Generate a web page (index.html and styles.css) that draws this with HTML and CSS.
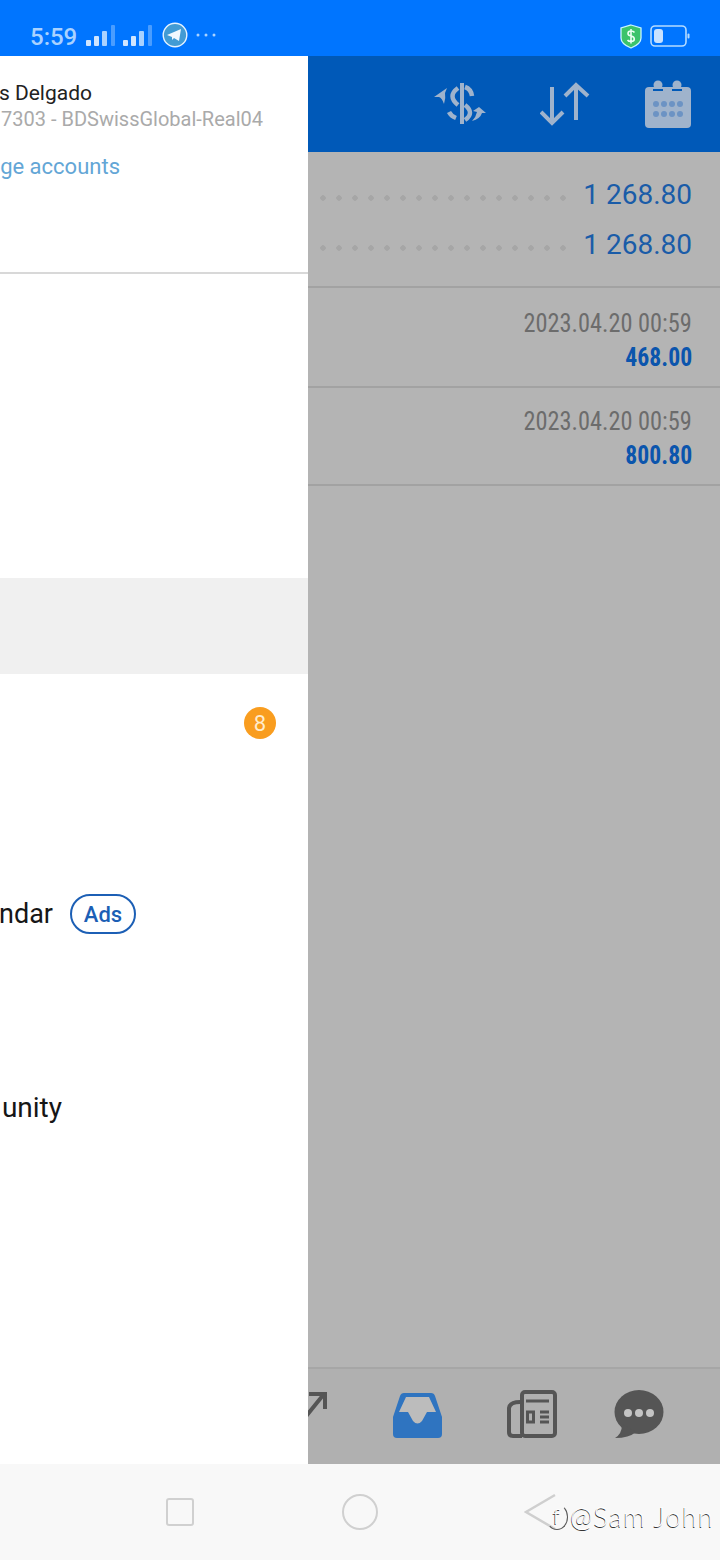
FILE: index.html
```html
<!DOCTYPE html>
<html lang="en">
<head>
  <meta charset="UTF-8" />
  <meta name="viewport" content="width=device-width, initial-scale=1.0"/>
  <title>Trading history</title>
  <link rel="stylesheet" href="styles.css">
</head>
<body>
  <!-- Status bar -->
  <div class="status-bar">
    <span class="clock">5:59</span>
    <svg class="signal" width="30" height="22" viewBox="0 0 30 22">
      <rect x="0" y="15" width="5" height="6" rx="1" fill="#cfe5ff"/>
      <rect x="8" y="11" width="5" height="10" rx="1" fill="#cfe5ff"/>
      <rect x="16" y="6" width="5" height="15" rx="1" fill="#a9d2ff"/>
      <rect x="25" y="0" width="4" height="21" rx="1" fill="#4a9dff"/>
    </svg>
    <svg class="signal second" width="30" height="22" viewBox="0 0 30 22">
      <rect x="0" y="15" width="5" height="6" rx="1" fill="#cfe5ff"/>
      <rect x="8" y="11" width="5" height="10" rx="1" fill="#cfe5ff"/>
      <rect x="16" y="6" width="5" height="15" rx="1" fill="#a9d2ff"/>
      <rect x="25" y="0" width="4" height="21" rx="1" fill="#4a9dff"/>
    </svg>
    <svg class="telegram" width="26" height="26" viewBox="0 0 26 26">
      <circle cx="13" cy="13" r="11.8" fill="#429bd4" stroke="#e6f3ff" stroke-width="1.4"/>
      <path d="M5 13 L19 7 L17 19 L12 16 L10 18 L10 15 Z" fill="#f2f8ff"/>
    </svg>
    <svg class="more" width="20" height="4" viewBox="0 0 20 4">
      <circle cx="2" cy="2" r="1.5" fill="#a9d2ff"/>
      <circle cx="10" cy="2" r="1.5" fill="#a9d2ff"/>
      <circle cx="18" cy="2" r="1.5" fill="#a9d2ff"/>
    </svg>
    <svg class="shield" width="22" height="25" viewBox="0 0 22 25">
      <path d="M11 1 L21 4 V14 Q21 20 11 24 Q1 20 1 14 V4 Z" fill="#3cc36b" stroke="#c9f5ff" stroke-width="1.3"/>
      <path d="M14.5 8.5 Q13.5 7 11 7 Q8 7 8 9.5 Q8 11.5 11 12 Q14.3 12.6 14.3 15 Q14.3 17.5 11 17.5 Q8.500 17.500 7.500 16 M11 5 V19.500" fill="none" stroke="#eafff2" stroke-width="1.6"/>
    </svg>
    <svg class="battery" width="40" height="22" viewBox="0 0 40 22">
      <rect x="1" y="1" width="35" height="20" rx="4" fill="none" stroke="#b5dbff" stroke-width="1.6"/>
      <rect x="4" y="4" width="9" height="14" rx="3" fill="#c9e2ff"/>
      <rect x="37.500" y="8.500" width="2" height="5" rx="1" fill="#b5dbff"/>
    </svg>
  </div>

  <div class="screen">
    <main class="app">
      <!-- Toolbar -->
      <header class="toolbar">
        <svg width="54" height="42" viewBox="0 0 54 42" fill="none" stroke="#9fb3cc">
          <path d="M28 0 V41" stroke-width="4"/>
          <path d="M31 4 Q37 6 38 13 M24 5 Q13 13 24 22 M31 22 Q41 30 31 37 M15 29 Q17 33 22 35" stroke-width="4.500"/>
          <path d="M0 14 L13 5 L11 10 Q12 15 10 21 Q8 15 5 14 Z" fill="#9fb3cc" stroke="none"/>
          <path d="M52 30 L45 24 L39 28 L43 29 Q42 34 38 38 Q46 36 48 30 Z" fill="#9fb3cc" stroke="none"/>
        </svg>
        <svg class="tool-arrows" width="50" height="44" viewBox="0 0 50 44" fill="none" stroke="#9fb3cc" stroke-width="4">
          <path d="M12 5 V41 M1 30 L12 41 L23 30"/>
          <path d="M36 38 V3 M25 14 L36 3 L48 14"/>
        </svg>
        <svg width="46" height="48" viewBox="0 0 46 48">
          <rect x="0" y="7" width="46" height="41" rx="4" fill="#9fb3cc"/>
          <circle cx="13" cy="5" r="4.500" fill="#9fb3cc"/>
          <circle cx="32" cy="5" r="4.500" fill="#9fb3cc"/>
          <rect x="8" y="9" width="10" height="2" fill="#0059b8"/>
          <rect x="27" y="9" width="10" height="2" fill="#0059b8"/>
          <g fill="#6c93c4">
            <circle cx="11" cy="24" r="3"/><circle cx="19" cy="24" r="3"/><circle cx="27" cy="24" r="3"/><circle cx="35" cy="24" r="3"/>
            <circle cx="11" cy="34" r="3"/><circle cx="19" cy="34" r="3"/><circle cx="27" cy="34" r="3"/><circle cx="35" cy="34" r="3"/>
          </g>
        </svg>
      </header>

      <!-- Summary -->
      <section class="summary">
        <div class="summary-row"><span class="leader"></span><span class="total">1 268.80</span></div>
        <div class="summary-row"><span class="leader"></span><span class="total">1 268.80</span></div>
      </section>

      <!-- Deals -->
      <div class="deal first">
        <span class="deal-date">2023.04.20 00:59</span>
        <span class="deal-amount">468.00</span>
      </div>
      <div class="deal">
        <span class="deal-date">2023.04.20 00:59</span>
        <span class="deal-amount">800.80</span>
      </div>

      <!-- Tab bar -->
      <nav class="tabs">
        <svg class="tab-trade" width="28" height="34" viewBox="0 0 28 34" fill="none" stroke="#555" stroke-width="4">
          <path d="M0 34 L25 3 M10 3 H26 V18"/>
        </svg>
        <svg class="tab-inbox" width="49" height="45" viewBox="0 0 49 45">
          <path d="M11 0 H38 Q41 0 42 3 L49 24 V41 Q49 45 45 45 H4 Q0 45 0 41 V24 L7 3 Q8 0 11 0 Z" fill="#2f74c0"/>
          <path d="M13 4 H36 L43 19 H34 L29 28 Q24.500 33 20 28 L15 19 H6 Z" fill="#bcbcbc"/>
        </svg>
        <svg class="tab-news" width="50" height="48" viewBox="0 0 50 48" fill="none" stroke="#555">
          <rect x="15" y="2" width="33" height="44" rx="3" stroke-width="4"/>
          <path d="M13 12 Q3 12 2 18 V42 Q2 46 6 46 H15" stroke-width="4"/>
          <path d="M19 11 H42" stroke-width="3"/>
          <rect x="20.500" y="22" width="6" height="10" stroke-width="3"/>
          <path d="M33 22 H42 M33 27 H42 M33 32 H42" stroke-width="3"/>
        </svg>
        <svg class="tab-chat" width="50" height="48" viewBox="0 0 50 48">
          <ellipse cx="25" cy="22" rx="24.500" ry="22" fill="#555"/>
          <path d="M8 34 Q8 44 1 48 Q15 48 22 42 Z" fill="#555"/>
          <circle cx="14" cy="23" r="4" fill="#c4c4c4"/>
          <circle cx="25" cy="23" r="4" fill="#c4c4c4"/>
          <circle cx="36" cy="23" r="4" fill="#c4c4c4"/>
        </svg>
      </nav>
    </main>

    <!-- Drawer, slid partly off the left edge -->
    <aside class="drawer">
      <div class="account">
        <div class="edge name-edge"><span>s Delgado</span></div>
        <div class="edge login-edge"><span>7303 - BDSwissGlobal-Real04</span></div>
        <div class="edge manage-edge"><span>ge accounts</span></div>
      </div>
      <div class="drawer-gap"></div>
      <div class="drawer-band"></div>
      <div class="drawer-row badge-row"><span class="badge">8</span></div>
      <div class="drawer-row"></div>
      <div class="drawer-row">
        <div class="edge calendar-edge"><span>ndar</span></div>
        <span class="ads">Ads</span>
      </div>
      <div class="drawer-row"></div>
      <div class="drawer-row community-row">
        <div class="edge community-edge"><span>unity</span></div>
      </div>
    </aside>
  </div>

  <!-- System navigation -->
  <footer class="system-nav">
    <span class="nav-square"></span>
    <span class="nav-circle"></span>
    <svg class="nav-back" width="34" height="38" viewBox="0 0 34 38" fill="none" stroke="#cfcfcf" stroke-width="2.500">
      <path d="M31 2 L2 19 L31 36"/>
    </svg>
    <div class="watermark">
      <span class="wm-logo">f</span><span>@Sam John</span>
    </div>
  </footer>
</body>
</html>
```

FILE: styles.css
```css
* {
  box-sizing: border-box;
}
body {
  font-family: 'Roboto', sans-serif;
  margin: 0;
  width: 720px;
  height: 1560px;
  overflow: hidden;
  display: flex;
  flex-direction: column;
  background-color: #f8f8f8;
}

/* status bar */
.status-bar {
  height: 56px;
  flex: none;
  background-color: #0075ff;
  display: flex;
  align-items: center;
  padding: 16px 30px 0;
}
.clock {
  font-size: 24px;
  font-weight: 500;
  color: #a9d2ff;
  margin-top: 2px;
}
.signal {
  margin-left: 9px;
}
.signal.second {
  margin-left: 7px;
}
.telegram {
  margin-left: 9px;
  margin-bottom: 2px;
}
.more {
  margin-left: 8px;
  margin-bottom: 2px;
}
.shield {
  margin-left: auto;
}
.battery {
  margin-left: 8px;
}

/* app behind the drawer */
.screen {
  position: relative;
  flex: 1;
}
.app {
  height: 100%;
  display: flex;
  flex-direction: column;
  background-color: #b4b4b4;
}
.toolbar {
  height: 96px;
  flex: none;
  background-color: #0059b8;
  display: flex;
  align-items: center;
  justify-content: flex-end;
  gap: 55px;
  padding-right: 29px;
}
.tool-arrows {
  margin-left: -3px;
}
.summary {
  padding: 17px 28px 17px 320px;
  border-bottom: 2px solid #a2a2a2;
}
.summary-row {
  height: 50px;
  display: flex;
  align-items: center;
}
.leader {
  flex: 1;
  height: 6px;
  margin-top: 8px;
  margin-right: 16px;
  background-image: radial-gradient(circle at 3px 3px, #a6a6a6 2.500px, transparent 3px);
  background-size: 16px 6px;
  background-repeat: repeat-x;
}
.total {
  font-size: 28px;
  color: #1a5ca8;
}
.deal {
  height: 98px;
  padding: 16px 28px 0 0;
  border-bottom: 2px solid #a2a2a2;
  display: flex;
  flex-direction: column;
  align-items: flex-end;
}
.deal.first {
  height: 100px;
  padding-top: 18px;
}
.deal-date,
.deal-amount {
  font-size: 26px;
  line-height: 34px;
  font-stretch: 75%;
  transform-origin: right center;
}
.deal-date {
  color: #6c6c6c;
  transform: scaleX(0.936);
}
.deal-amount {
  color: #0b55ad;
  font-weight: bold;
  transform: scaleX(0.913);
}
.tabs {
  margin-top: auto;
  height: 97px;
  border-top: 2px solid #a6a6a6;
  background-color: #b0b0b0;
  display: flex;
  align-items: center;
  justify-content: flex-end;
  padding-right: 56px;
}
.tab-trade {
  margin-bottom: 18px;
}
.tab-inbox {
  margin-left: 66px;
  margin-bottom: 2px;
}
.tab-news {
  margin-left: 65px;
  margin-bottom: 6px;
}
.tab-chat {
  margin-left: 57px;
  margin-bottom: 6px;
}

/* drawer */
.drawer {
  position: absolute;
  top: 0;
  left: 0;
  bottom: 0;
  width: 308px;
  overflow: hidden;
  background-color: #fff;
}
.account {
  height: 218px;
  padding-top: 22px;
  border-bottom: 2px solid #d8d8d8;
}
/* the drawer is cut by the screen edge, so each line is placed by where it ends */
.edge {
  display: flex;
  justify-content: flex-end;
  white-space: nowrap;
}
.name-edge {
  width: 92px;
  font-size: 21px;
  line-height: 30px;
  color: #222;
}
.login-edge {
  width: 263px;
  font-size: 20px;
  line-height: 22px;
  color: #aaa;
}
.manage-edge {
  width: 120px;
  margin-top: 22px;
  font-size: 22px;
  line-height: 30px;
  color: #63a6d6;
}
.drawer-gap {
  height: 304px;
}
.drawer-band {
  height: 96px;
  background-color: #f0f0f0;
}
.drawer-row {
  height: 96px;
  display: flex;
  align-items: center;
  font-size: 28px;
  color: #161616;
}
.badge-row {
  justify-content: flex-end;
  padding: 2px 32px 0 0;
}
.community-row {
  padding-top: 2px;
}
.badge {
  width: 32px;
  height: 32px;
  border-radius: 50%;
  background-color: #f99d1f;
  color: #ffeccc;
  font-size: 22px;
  display: flex;
  align-items: center;
  justify-content: center;
}
.calendar-edge {
  width: 53px;
  font-size: 27px;
}
.community-edge {
  width: 62px;
}
.ads {
  margin-left: 17px;
  width: 66px;
  height: 40px;
  border: 2px solid #1c5fb5;
  border-radius: 20px;
  color: #1c5fb5;
  font-size: 22px;
  font-weight: 500;
  display: flex;
  align-items: center;
  justify-content: center;
}

/* system navigation */
.system-nav {
  position: relative;
  height: 96px;
  flex: none;
  background-color: #f8f8f8;
  display: flex;
  align-items: center;
}
.nav-square {
  width: 28px;
  height: 28px;
  margin-left: 166px;
  border: 2px solid #d0d0d0;
  border-radius: 3px;
}
.nav-circle {
  width: 36px;
  height: 36px;
  margin-left: 148px;
  border: 2px solid #d0d0d0;
  border-radius: 50%;
}
.nav-back {
  margin-left: 146px;
}
.watermark {
  position: absolute;
  left: 546px;
  top: 36px;
  display: flex;
  align-items: center;
  gap: 2px;
  font-family: 'Lato', sans-serif;
  font-weight: 300;
  font-size: 27px;
  line-height: 34px;
  letter-spacing: 1.2px;
  color: #fff;
  text-shadow: -0.6px 0.6px 0.4px #333;
}
.wm-logo {
  width: 22px;
  height: 26px;
  border-radius: 50%;
  border: 1.5px solid #555;
  border-left-color: transparent;
  border-top-color: transparent;
  font-size: 22px;
  line-height: 22px;
  text-align: center;
}
```
